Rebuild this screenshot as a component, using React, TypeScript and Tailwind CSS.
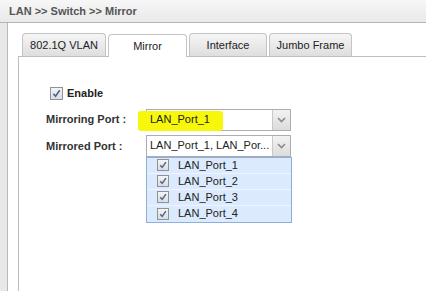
import React from "react";

const ports = ["LAN_Port_1", "LAN_Port_2", "LAN_Port_3", "LAN_Port_4"];
const tabs = [
  { label: "802.1Q VLAN", w: "w-[84px]" },
  { label: "Mirror", w: "w-[79px]" },
  { label: "Interface", w: "w-[78px]" },
  { label: "Jumbo Frame", w: "w-[83px]" },
];

function Check({ size = 13 }: { size?: number }) {
  return (
    <span
      className="flex items-center justify-center border border-[#8f9296] bg-gradient-to-b from-[#f4f4f4] to-[#dadde2]"
      style={{ width: size, height: size }}
    >
      <svg width={size - 4} height={size - 4} viewBox="0 0 10 10">
        <path d="M1.5 5.2 L4 8 L8.6 1.4" fill="none" stroke="#4d6391" strokeWidth="1.8" />
      </svg>
    </span>
  );
}

function Arrow() {
  return (
    <span className="flex w-[18px] items-center justify-center self-stretch border-l border-[#c9c9c9] bg-gradient-to-b from-[#f2f2f2] to-[#dcdcdc]">
      <svg width="9" height="6" viewBox="0 0 9 6">
        <path d="M1 1 L4.5 4.5 L8 1" fill="none" stroke="#8a8a8a" strokeWidth="1.6" />
      </svg>
    </span>
  );
}

export default function App() {
  return (
    <div className="flex h-[291px] w-[426px] flex-col overflow-hidden bg-white font-['Liberation_Sans',Arial,sans-serif] text-[11px] text-[#222]">
      {/* title bar */}
      <div className="flex h-[23px] shrink-0 items-center border-b border-[#b4b4b4] bg-gradient-to-b from-[#f7f7f7] to-[#e9e9e9] pl-[9px]">
        <span className="font-bold text-[#555]">LAN &gt;&gt; Switch &gt;&gt; Mirror</span>
      </div>

      <div className="flex flex-1">
        <div className="w-[8px] border-r border-[#b9b9b9] bg-[#e8e8e8]" />

        <div className="flex flex-1 flex-col pl-[10px] pt-[10px]">
          {/* tabs */}
          <div className="flex gap-[2px] pl-[4px]">
            {tabs.map((t) => {
              const active = t.label === "Mirror";
              return (
                <div
                  key={t.label}
                  className={
                    active
                      ? `relative top-px flex h-[23px] ${t.w} items-center justify-center rounded-t-[4px] border border-b-0 border-[#c4c4c4] bg-white text-[#222]`
                      : `flex h-[23px] ${t.w} items-center justify-center rounded-t-[4px] border border-b-0 border-[#c4c4c4] bg-gradient-to-b from-[#f6f6f6] to-[#dedede] text-[#222]`
                  }
                >
                  {t.label}
                </div>
              );
            })}
          </div>

          {/* panel */}
          <div className="flex-1 border-l border-t border-[#bdbdbd] pl-[27px] pt-[28px]">
            <div className="flex items-center gap-[4px] pl-[4px]">
              <Check />
              <span className="font-bold">Enable</span>
            </div>

            <div className="mt-[7px] flex items-center">
              <span className="w-[100px] font-bold text-[#333]">Mirroring Port :</span>
              <div className="relative flex h-[22px] w-[145px] items-center border border-[#abadb3] bg-white">
                <span className="absolute left-[-9px] top-[1px] h-[20px] w-[85px] rounded-[3px] bg-[#f7f70c] blur-[0.6px]" />
                <span className="relative z-10 flex-1 pl-[3px]">LAN_Port_1</span>
                <Arrow />
              </div>
            </div>

            <div className="mt-[4px] flex items-start">
              <span className="w-[100px] pt-[3px] font-bold text-[#333]">Mirrored Port :</span>
              <div className="flex w-[146px] flex-col">
                <div className="flex h-[22px] w-[145px] items-center border border-[#abadb3] bg-white">
                  <span className="flex-1 pl-[3px]">LAN_Port_1, LAN_Por...</span>
                  <Arrow />
                </div>
                <div className="flex flex-col border border-[#8eaedb] bg-[#dbeafc]">
                  {ports.map((p) => (
                    <div
                      key={p}
                      className="flex h-[16px] items-center gap-[9px] border-b border-[#eef5fe] pl-[10px] last:border-b-0"
                    >
                      <Check size={12} />
                      <span>{p}</span>
                    </div>
                  ))}
                </div>
              </div>
            </div>
          </div>
        </div>
      </div>
    </div>
  );
}
